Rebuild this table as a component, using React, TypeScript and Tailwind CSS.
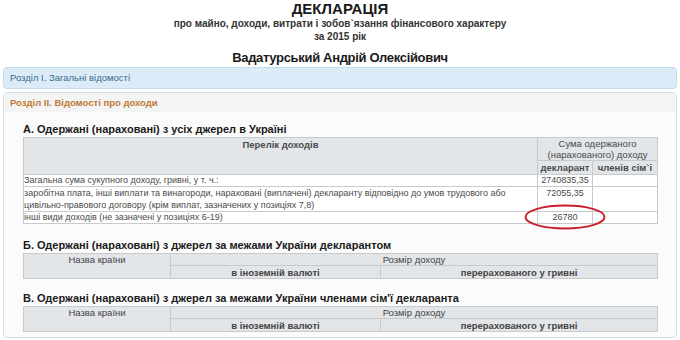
import React from 'react';

const cellBorder = 'border border-[#c6cacd]';

const AbroadTable: React.FC = () => (
  <table className="w-[634px] border-collapse text-[9.5px] text-[#444] table-fixed">
    <colgroup>
      <col className="w-[147px]" />
      <col className="w-[210px]" />
      <col className="w-[277px]" />
    </colgroup>
    <tbody>
      <tr className="h-[12px] bg-[#e3e6e9]">
        <td rowSpan={2} className={`${cellBorder} align-top text-center leading-[11px] p-0`}>
          Назва країни
        </td>
        <td colSpan={2} className={`${cellBorder} text-center leading-[11px] p-0`}>
          Розмір доходу
        </td>
      </tr>
      <tr className="h-[13px] bg-[#e3e6e9]">
        <td className={`${cellBorder} text-center font-bold leading-[11px] p-0`}>в іноземній валюті</td>
        <td className={`${cellBorder} text-center font-bold leading-[11px] p-0`}>перерахованого у гривні</td>
      </tr>
    </tbody>
  </table>
);

const App: React.FC = () => {
  return (
    <div className="w-[680px] h-[340px] overflow-hidden bg-white font-['Liberation_Sans',Arial,sans-serif] text-[#222]">
      {/* Title */}
      <div className="text-center">
        <div className="h-[16px] leading-[17px] text-[15px] font-bold text-[#1a1a1a]">ДЕКЛАРАЦІЯ</div>
        <div className="h-[13px] leading-[13px] text-[10px] font-bold text-[#333] mt-[1px]">
          про майно, доходи, витрати і зобов`язання фінансового характеру
        </div>
        <div className="h-[13px] leading-[13px] text-[10px] font-bold text-[#333]">за 2015 рік</div>
        <div className="h-[16px] leading-[16px] text-[13px] tracking-tight font-bold text-[#1a1a1a] mt-[7px]">
          Вадатурський Андрій Олексійович
        </div>
      </div>

      {/* Section I */}
      <div className="mx-[3px] mt-[1px] h-[22px] rounded-[4px] border border-[#c3dcea] bg-[#dbecf8] px-[6px] leading-[20px] text-[9.5px] text-[#3a6b8a]">
        Розділ І. Загальні відомості
      </div>

      {/* Section II */}
      <div className="mx-[3px] mt-[3px] h-[246px] rounded-[4px] border border-[#d3dde2] bg-[#fbfbfb] overflow-hidden">
        <div className="h-[19px] bg-[#f3f4f4] px-[6px] leading-[19px] text-[9.5px] font-bold text-[#c07a35]">
          Розділ ІІ. Відомості про доходи
        </div>
        <div className="pl-[19px]">
          <div className="mt-[10px] h-[15px] leading-[15px] text-[11px] font-bold text-[#1a1a1a]">
            А. Одержані (нараховані) з усіх джерел в Україні
          </div>
          <div className="relative w-[634px]">
            <table className="w-[634px] border-collapse text-[9px] text-[#4a4a4a] table-fixed">
              <colgroup>
                <col className="w-[514px]" />
                <col className="w-[55px]" />
                <col className="w-[65px]" />
              </colgroup>
              <tbody>
                <tr className="h-[23px] bg-[#e3e6e9]">
                  <td rowSpan={2} className={`${cellBorder} align-top text-center font-bold text-[9.5px] leading-[11px] p-0 pt-[1px]`}>
                    Перелік доходів
                  </td>
                  <td colSpan={2} className={`${cellBorder} text-center text-[9.5px] leading-[11px] p-0`}>
                    Сума одержаного
                    <br />
                    (нарахованого) доходу
                  </td>
                </tr>
                <tr className="h-[14px] bg-[#e3e6e9]">
                  <td className={`${cellBorder} text-center font-bold text-[9.5px] leading-[11px] p-0`}>декларант</td>
                  <td className={`${cellBorder} text-center font-bold text-[9.5px] leading-[11px] p-0`}>членів сім`і</td>
                </tr>
                <tr className="h-[12px] bg-white">
                  <td className={`${cellBorder} leading-[11px] p-0`}>Загальна сума сукупного доходу, гривні, у т. ч.:</td>
                  <td className={`${cellBorder} text-center leading-[11px] p-0`}>2740835,35</td>
                  <td className={`${cellBorder} p-0`}></td>
                </tr>
                <tr className="h-[24px] bg-white">
                  <td className={`${cellBorder} leading-[12px] p-0`}>
                    заробітна плата, інші виплати та винагороди, нараховані (виплачені) декларанту відповідно до умов трудового або
                    <br />
                    цивільно-правового договору (крім виплат, зазначених у позиціях 7,8)
                  </td>
                  <td className={`${cellBorder} align-top text-center leading-[12px] p-0`}>72055,35</td>
                  <td className={`${cellBorder} p-0`}></td>
                </tr>
                <tr className="h-[12px] bg-white">
                  <td className={`${cellBorder} leading-[11px] p-0`}>інші види доходів (не зазначені у позиціях 6-19)</td>
                  <td className={`${cellBorder} text-center leading-[11px] p-0`}>26780</td>
                  <td className={`${cellBorder} p-0`}></td>
                </tr>
              </tbody>
            </table>
            <svg className="absolute left-[501px] top-[67px]" width="82" height="26" viewBox="0 0 82 26">
              <ellipse cx="41" cy="13" rx="39.5" ry="11.5" fill="none" stroke="#c91f2b" strokeWidth="2" />
            </svg>
          </div>

          <div className="mt-[13px] h-[16px] leading-[16px] text-[11px] font-bold text-[#1a1a1a]">
            Б. Одержані (нараховані) з джерел за межами України декларантом
          </div>
          <AbroadTable />

          <div className="mt-[12px] h-[15px] leading-[15px] text-[11px] font-bold text-[#1a1a1a]">
            В. Одержані (нараховані) з джерел за межами України членами сім'ї декларанта
          </div>
          <AbroadTable />
        </div>
      </div>
    </div>
  );
};

export default App;
